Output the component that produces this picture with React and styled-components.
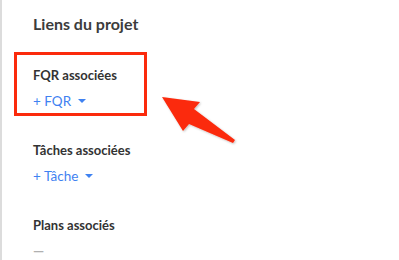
import styled, { createGlobalStyle } from "styled-components";

const GlobalStyle = createGlobalStyle`
    html, body {
        margin: 0;
        padding: 0;
        background: #fff;
    }
    body {
        font-family: Lato, "Open Sans", sans-serif;
    }
`;

const Panel = styled.div`
    position: relative;
    box-sizing: border-box;
    width: 399px;
    height: 260px;
    overflow: hidden;
    border-left: 2px solid #dcdcdc;
    padding: 14px 0 0 31px;
`;

const Title = styled.h2`
    margin: 0 0 32px;
    font-size: 16px;
    line-height: 20px;
    font-weight: 700;
    color: #3c3c3c;
`;

const Section = styled.section`
    display: flex;
    flex-direction: column;
    align-items: flex-start;
    gap: 8px;
    margin-bottom: 31px;
`;

const Label = styled.h3`
    margin: 0;
    font-size: 13px;
    line-height: 18px;
    font-weight: 700;
    color: #333;
`;

const AddButton = styled.button`
    display: flex;
    align-items: center;
    gap: 7px;
    padding: 0;
    border: none;
    background: transparent;
    cursor: pointer;
    font-family: inherit;
    font-size: 13.5px;
    line-height: 18px;
    color: #3f82f1;
`;

const Caret = styled.span`
    width: 0;
    height: 0;
    border-left: 4px solid transparent;
    border-right: 4px solid transparent;
    border-top: 4px solid #3f82f1;
    margin-top: -1px;
`;

const Empty = styled.span`
    font-size: 14px;
    line-height: 18px;
    font-weight: 700;
    color: #b0b0b0;
`;

// annotation layer, drawn over the panel
const Highlight = styled.div`
    position: absolute;
    left: 12px;
    top: 52px;
    width: 133px;
    height: 64px;
    box-sizing: border-box;
    border: 3px solid #fb2a0c;
    pointer-events: none;
`;

const Arrow = styled.svg`
    position: absolute;
    left: 0;
    top: 0;
    pointer-events: none;
`;

const links = [
    { label: "FQR associées", action: "+ FQR" },
    { label: "Tâches associées", action: "+ Tâche" },
    { label: "Plans associés" },
];

const App = () => (
    <>
        <GlobalStyle />
        <Panel>
            <Title>Liens du projet</Title>
            {links.map((item) => (
                <Section key={item.label}>
                    <Label>{item.label}</Label>
                    {item.action ? (
                        <AddButton>
                            {item.action}
                            <Caret />
                        </AddButton>
                    ) : (
                        <Empty>—</Empty>
                    )}
                </Section>
            ))}
            <Highlight />
            <Arrow width="399" height="260" viewBox="0 0 399 260">
                <defs>
                    <filter id="shadow" x="-20%" y="-20%" width="140%" height="140%">
                        <feDropShadow dx="1" dy="1" stdDeviation="1" floodColor="#000" floodOpacity="0.25" />
                    </filter>
                </defs>
                <polygon
                    points="160,97 198,102 192,109 233,140 231,143 187,124 181,131"
                    fill="#fb2a0c"
                    filter="url(#shadow)"
                />
            </Arrow>
        </Panel>
    </>
);

export default App;
